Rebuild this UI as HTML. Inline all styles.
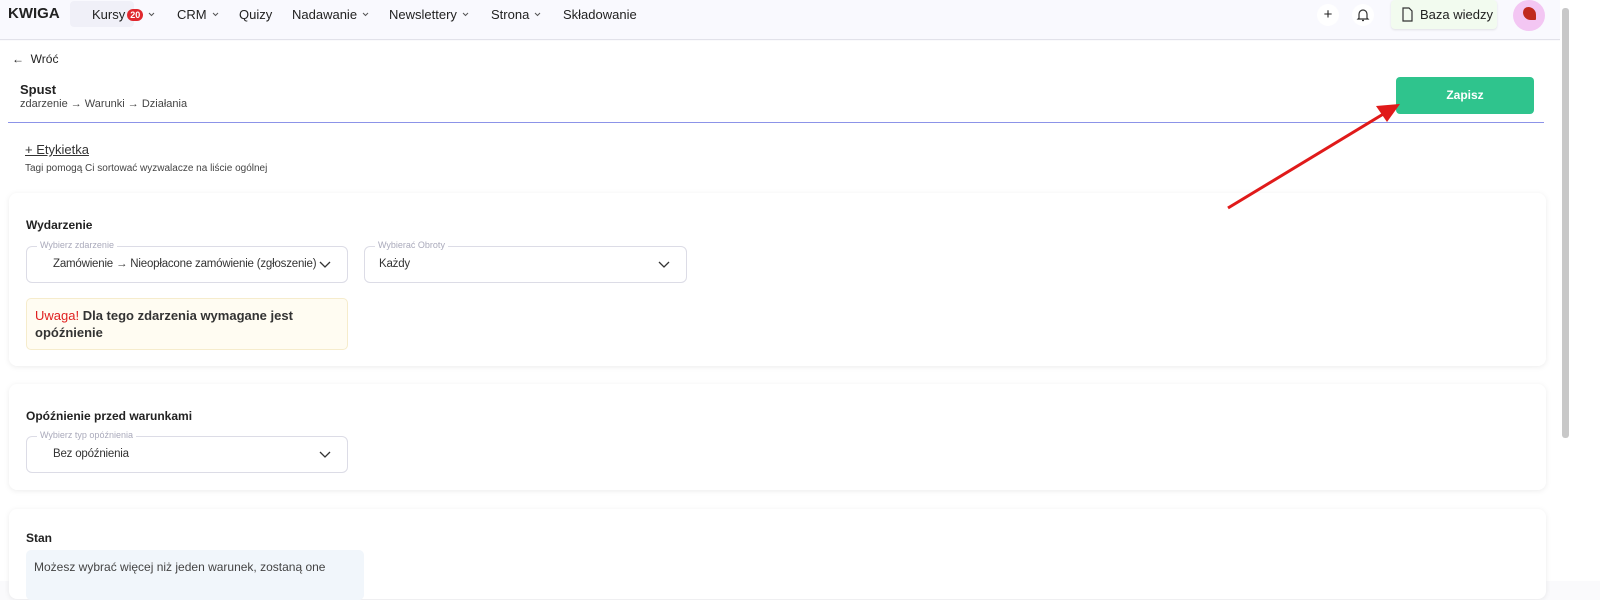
<!DOCTYPE html>
<html><head><meta charset="utf-8"><style>
*{box-sizing:border-box;margin:0;padding:0}
body{width:1600px;height:581px;overflow:hidden;background:#fafafc;font-family:"Liberation Sans",sans-serif;color:#222;position:relative;font-size:13px}
.nav{position:absolute;left:0;top:0;width:1560px;height:40px;background:#f9f9fe;border-bottom:1px solid #e2e2ea}
.nav span.i{position:absolute;top:7px;font-size:13px;color:#222;white-space:nowrap}
.logo{position:absolute;left:8px;top:5px;font-weight:bold;font-size:15px;font-family:"Liberation Sans Narrow","Liberation Sans",sans-serif}
.cv{display:inline-block;margin-left:5px;vertical-align:2px}
.badge{display:inline-block;background:#e0282e;color:#fff;font-size:9px;line-height:10px;border-radius:6px;padding:1px 3px;font-weight:bold;vertical-align:1px;margin-left:2px}
.main{position:absolute;left:0;top:41px;width:1560px;height:540px;background:#fff}
.scroll{position:absolute;left:1560px;top:0;width:40px;height:581px;background:#fff}
.scroll div{position:absolute;left:2px;top:8px;width:7px;height:430px;background:#c8c8c8;border-radius:3px}
.card{position:absolute;left:9px;width:1537px;background:#fff;border-radius:8px;box-shadow:0 1px 6px rgba(0,0,0,.08)}
.h{position:absolute;left:17px;font-weight:bold;font-size:12px}
.sel{position:absolute;height:37px;border:1px solid #dcdce6;border-radius:6px;font-size:11.5px;color:#333}
.sel .l{position:absolute;top:-7px;left:10px;background:#fff;padding:0 3px;font-size:9px;color:#aab}
.sel .v{position:absolute;left:26px;top:11px;white-space:nowrap;letter-spacing:-0.2px}
.sel svg{position:absolute;right:16px;top:14px}
</style></head><body>
<div class="nav">
<span class="logo">KWIGA</span>
<div style="position:absolute;left:70px;top:1px;width:64px;height:26px;background:#f0f0f8;border-radius:4px"></div>
<span class="i" style="left:92px">Kursy<span class="badge">20</span><svg class="cv" width="7" height="5"><path d="M1 1l2.5 2.5L6 1" fill="none" stroke="#555" stroke-width="1"/></svg></span>
<span class="i" style="left:177px">CRM<svg class="cv" width="7" height="5"><path d="M1 1l2.5 2.5L6 1" fill="none" stroke="#555" stroke-width="1"/></svg></span>
<span class="i" style="left:239px">Quizy</span>
<span class="i" style="left:292px">Nadawanie<svg class="cv" width="7" height="5"><path d="M1 1l2.5 2.5L6 1" fill="none" stroke="#555" stroke-width="1"/></svg></span>
<span class="i" style="left:389px">Newslettery<svg class="cv" width="7" height="5"><path d="M1 1l2.5 2.5L6 1" fill="none" stroke="#555" stroke-width="1"/></svg></span>
<span class="i" style="left:491px">Strona<svg class="cv" width="7" height="5"><path d="M1 1l2.5 2.5L6 1" fill="none" stroke="#555" stroke-width="1"/></svg></span>
<span class="i" style="left:563px">Składowanie</span>
<div style="position:absolute;left:1317px;top:4px;width:22px;height:22px;border-radius:50%;background:#fff;text-align:center;line-height:22px;font-size:15px">+</div>
<div style="position:absolute;left:1352px;top:4px;width:22px;height:22px;border-radius:50%;background:#fff"><svg width="22" height="22" viewBox="0 0 22 22"><path d="M7 14V10a4 4 0 0 1 8 0v4l1 1H6z M10 16.5h2" fill="none" stroke="#333" stroke-width="1.2"/></svg></div>
<div style="position:absolute;left:1391px;top:0;width:106px;height:29px;background:#f2fbef;border-radius:4px;box-shadow:0 1px 2px rgba(0,0,0,.1)"><svg style="position:absolute;left:10px;top:7px" width="12" height="15" viewBox="0 0 12 15"><path d="M2 1h6l3 3v10H2z" fill="none" stroke="#333" stroke-width="1.2"/></svg><span style="position:absolute;left:29px;top:7px;font-size:13px">Baza wiedzy</span></div>
<div style="position:absolute;left:1513px;top:0;width:32px;height:31px;border-radius:50%;background:#f3c6f3"><div style="position:absolute;left:10px;top:7px;width:13px;height:13px;background:#c0281e;border-radius:40% 60% 10% 60%"></div></div>
</div>
<div class="main">
<span style="position:absolute;left:12px;top:11px;font-size:12px">←&nbsp; Wróć</span>
<div style="position:absolute;left:20px;top:41px;font-weight:bold;font-size:13px">Spust</div>
<div style="position:absolute;left:20px;top:57px;font-size:11px;color:#444">zdarzenie → Warunki → Działania</div>
<div style="position:absolute;left:1396px;top:36px;width:138px;height:37px;background:#2fc48d;border-radius:4px;color:#fff;font-weight:bold;font-size:12px;text-align:center;line-height:37px">Zapisz</div>
<div style="position:absolute;left:8px;top:81px;width:1536px;height:1px;background:#8c93e8"></div>
<div style="position:absolute;left:25px;top:101px;font-size:13px;text-decoration:underline;color:#333">+ Etykietka</div>
<div style="position:absolute;left:25px;top:122px;font-size:10px;color:#444">Tagi pomogą Ci sortować wyzwalacze na liście ogólnej</div>
</div>
<div class="card" style="top:193px;height:173px">
<div class="h" style="top:25px">Wydarzenie</div>
<div class="sel" style="left:17px;top:53px;width:322px"><span class="l">Wybierz zdarzenie</span><span class="v">Zamówienie → Nieopłacone zamówienie (zgłoszenie)</span><svg width="12" height="8"><path d="M1 1l5 5 5-5" fill="none" stroke="#333" stroke-width="1.3"/></svg></div>
<div class="sel" style="left:355px;top:53px;width:323px"><span class="l">Wybierać Obroty</span><span class="v" style="left:14px">Każdy</span><svg width="12" height="8"><path d="M1 1l5 5 5-5" fill="none" stroke="#333" stroke-width="1.3"/></svg></div>
<div style="position:absolute;left:17px;top:105px;width:322px;height:52px;background:#fffcf2;border:1px solid #f6eccc;border-radius:5px;padding:8px 8px;font-size:13px;line-height:17px;font-weight:bold;color:#333"><span style="color:#e02020;font-weight:normal">Uwaga!</span> Dla tego zdarzenia wymagane jest opóźnienie</div>
</div>
<div class="card" style="top:384px;height:106px">
<div class="h" style="top:25px">Opóźnienie przed warunkami</div>
<div class="sel" style="left:17px;top:52px;width:322px"><span class="l">Wybierz typ opóźnienia</span><span class="v">Bez opóźnienia</span><svg width="12" height="8"><path d="M1 1l5 5 5-5" fill="none" stroke="#333" stroke-width="1.3"/></svg></div>
</div>
<div class="card" style="top:509px;height:90px">
<div class="h" style="top:22px">Stan</div>
<div style="position:absolute;left:17px;top:41px;width:338px;height:50px;background:#f1f6fb;border-radius:5px;padding:10px 8px;font-size:12px;color:#444">Możesz wybrać więcej niż jeden warunek, zostaną one</div>
</div>
<div class="scroll"><div></div></div>
<svg style="position:absolute;left:0;top:0" width="1600" height="581"><line x1="1228" y1="208" x2="1385" y2="113" stroke="#e01a1a" stroke-width="3"/><polygon points="1400,104 1376,106 1387,122" fill="#e01a1a"/></svg>
</body></html>
